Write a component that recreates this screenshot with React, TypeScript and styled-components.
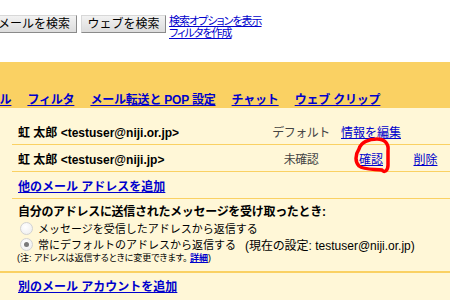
import React from 'react'
import styled, { createGlobalStyle } from 'styled-components'

const GlobalStyle = createGlobalStyle`
  html, body {
    margin: 0;
    padding: 0;
    background: #fff7d7;
    overflow: hidden;
  }
  body {
    font-family: "Liberation Sans", Arial, "Noto Sans CJK JP", sans-serif;
    font-size: 12px;
    color: #000;
  }
`

const Page = styled.div`
  position: relative;
  width: 450px;
  height: 300px;
  overflow: hidden;
`

const SearchBar = styled.div`
  display: flex;
  align-items: flex-start;
  height: 62px;
  box-sizing: border-box;
  padding-top: 15px;
  margin-left: -9px;
  background: #fff;
`

const SearchButton = styled.button<{ $width: number }>`
  width: ${(p) => p.$width}px;
  height: 18px;
  margin-right: 4px;
  padding: 0;
  border: 1px solid;
  border-color: #d8d8d8 #8a8a8a #8a8a8a #d8d8d8;
  background: linear-gradient(#f2f2f2, #dcdcdc);
  font: inherit;
  font-size: 12px;
  line-height: 16px;
  color: #000;
`

const SearchLinks = styled.div`
  display: flex;
  flex-direction: column;
  margin-left: -1px;
  font-size: 11px;
  line-height: 12px;
  letter-spacing: -1px;
  font-feature-settings: "palt" 1;
`

const Link = styled.a<{ $bold?: boolean }>`
  color: #0000cc;
  text-decoration: underline;
  font-weight: ${(p) => (p.$bold ? 'bold' : 'normal')};
  cursor: pointer;
`

const TabBand = styled.div`
  display: flex;
  align-items: flex-end;
  gap: 16px;
  height: 46px;
  box-sizing: border-box;
  padding-bottom: 1px;
  margin-left: -24px;
  background: #fad163;
  line-height: 14px;
  white-space: nowrap;
`

const Tab = styled(Link)`
  font-weight: bold;
  letter-spacing: -0.2px;
`

const AddressTable = styled.div`
  position: relative;
  margin: 10px 0 0 12px;
`

const Row = styled.div`
  display: grid;
  grid-template-columns: 1fr 64px 76px 33px;
  align-items: center;
  height: 26px;
  padding-right: 8px;
  border-bottom: 1px solid #fad163;
`

const NameCell = styled.div`
  padding-left: 6px;
  font-weight: bold;
  white-space: nowrap;
`

const StatusCell = styled.div`
  text-align: center;
  color: #444;
  white-space: nowrap;
  letter-spacing: -0.5px;
`

const ActionCell = styled.div`
  text-align: center;
  white-space: nowrap;
`

const Annotation = styled.svg`
  position: absolute;
  left: 338px;
  top: 20px;
  width: 45px;
  height: 38px;
  overflow: visible;
  pointer-events: none;
`

const ReplySection = styled.div`
  padding: 5px 0 0 18px;
  border-bottom: 2px solid #fad163;
`

const Heading = styled.div`
  font-weight: bold;
  line-height: 16px;
  letter-spacing: -0.3px;
  white-space: nowrap;
`

const RadioRow = styled.label`
  display: flex;
  align-items: center;
  gap: 5px;
  height: 16px;
  padding-left: 2px;
  font-size: 11px;
  white-space: nowrap;
`

const CurrentSetting = styled.span`
  margin-left: 4px;
  font-size: 12px;
  font-feature-settings: "palt" 1;
`

const RadioDot = styled.span<{ $checked?: boolean }>`
  position: relative;
  flex: none;
  width: 11px;
  height: 11px;
  border: 1px solid #d2d2d2;
  border-radius: 50%;
  background: radial-gradient(circle at 40% 35%, #ffffff, #ececec);

  &::after {
    content: '';
    display: ${(p) => (p.$checked ? 'block' : 'none')};
    position: absolute;
    left: 3px;
    top: 3px;
    width: 5px;
    height: 5px;
    border-radius: 50%;
    background: #7a7a7a;
  }
`

const Note = styled.div`
  margin: 0 0 7px -1px;
  font-size: 9px;
  line-height: 12px;
  white-space: nowrap;
  font-feature-settings: "palt" 1;
`

const Footer = styled.div`
  padding: 6px 0 0 18px;
  line-height: 16px;
`

const tabs = ['ラベル', 'フィルタ', 'メール転送と POP 設定', 'チャット', 'ウェブ クリップ']

export default function App() {
  return (
    <Page>
      <GlobalStyle />
      <SearchBar>
        <SearchButton $width={86}>メールを検索</SearchButton>
        <SearchButton $width={85}>ウェブを検索</SearchButton>
        <SearchLinks>
          <Link>検索オプションを表示</Link>
          <Link>フィルタを作成</Link>
        </SearchLinks>
      </SearchBar>

      <TabBand>
        {tabs.map((t) => (
          <Tab key={t}>{t}</Tab>
        ))}
      </TabBand>

      <AddressTable>
        <Row>
          <NameCell>虹 太郎 &lt;testuser@niji.or.jp&gt;</NameCell>
          <StatusCell>デフォルト</StatusCell>
          <ActionCell>
            <Link>情報を編集</Link>
          </ActionCell>
          <ActionCell />
        </Row>
        <Row>
          <NameCell>虹 太郎 &lt;testuser@niji.jp&gt;</NameCell>
          <StatusCell>未確認</StatusCell>
          <ActionCell>
            <Link>確認</Link>
          </ActionCell>
          <ActionCell>
            <Link>削除</Link>
          </ActionCell>
        </Row>
        <Row>
          <NameCell>
            <Link $bold>他のメール アドレスを追加</Link>
          </NameCell>
        </Row>
        <Annotation viewBox="0 0 45 38">
          <path
            d="M 9 11 C 11 4, 19 1, 27 1 C 35 1, 39 6, 38 13 L 38 27 C 38 33, 34 35, 32 32 C 24 31, 14 32, 9 28 C 5 24, 5 17, 9 11"
            fill="none"
            stroke="#f00"
            strokeWidth="3.5"
            strokeLinecap="round"
            strokeLinejoin="round"
          />
        </Annotation>
      </AddressTable>

      <ReplySection>
        <Heading>自分のアドレスに送信されたメッセージを受け取ったとき:</Heading>
        <RadioRow>
          <RadioDot />
          メッセージを受信したアドレスから返信する
        </RadioRow>
        <RadioRow>
          <RadioDot $checked />
          常にデフォルトのアドレスから返信する
          <CurrentSetting>(現在の設定: testuser@niji.or.jp)</CurrentSetting>
        </RadioRow>
        <Note>
          (注: アドレスは返信するときに変更できます。 <Link $bold>詳細</Link>)
        </Note>
      </ReplySection>

      <Footer>
        <Link $bold>別のメール アカウントを追加</Link>
      </Footer>
    </Page>
  )
}
